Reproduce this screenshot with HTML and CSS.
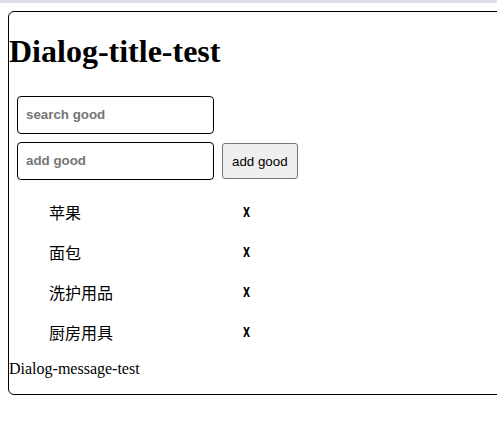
FILE: index.html
```html
<!DOCTYPE html>
<html lang="zh">
<head>
<meta charset="utf-8">
<title>Dialog</title>
<link rel="stylesheet" href="styles.css">
</head>
<body>
<div class="topbar"></div>
<div class="page">
  <div class="dialog">
    <h1 class="dialog-title">Dialog-title-test</h1>
    <div class="controls">
      <input class="field" type="text" placeholder="search good">
      <div class="add-row">
        <input class="field" type="text" placeholder="add good">
        <button class="add-btn" type="button">add good</button>
      </div>
    </div>
    <ul class="goods">
      <li class="good"><span class="good-name">苹果</span><span class="good-del">X</span></li>
      <li class="good"><span class="good-name">面包</span><span class="good-del">X</span></li>
      <li class="good"><span class="good-name">洗护用品</span><span class="good-del">X</span></li>
      <li class="good"><span class="good-name">厨房用具</span><span class="good-del">X</span></li>
    </ul>
    <p class="dialog-message">Dialog-message-test</p>
  </div>
</div>
</body>
</html>
```

FILE: styles.css
```css
html, body {
  margin: 0;
  padding: 0;
  background: #ffffff;
  overflow: hidden;
}

body {
  font-family: "Liberation Serif", "Noto Sans CJK SC", serif;
  color: #000;
}

.topbar {
  height: 3px;
  background: #dedee6;
}

.page {
  padding: 8px 0 0 8px;
}

.dialog {
  width: 600px;
  border: 1px solid #000;
  border-radius: 6px;
}

.dialog-title {
  margin: 21px 0 22px;
  font-size: 32px;
  line-height: 37px;
  font-weight: bold;
}

.controls {
  display: flex;
  flex-direction: column;
  gap: 8px;
  padding: 4px 8px 0;
}

.add-row {
  display: flex;
  align-items: center;
  gap: 8px;
}

.field {
  box-sizing: border-box;
  width: 197px;
  height: 38px;
  margin: 0;
  padding: 0 8px 1px;
  border: 1px solid #000;
  border-radius: 4px;
  font-family: "Liberation Sans", Arial, sans-serif;
  font-size: 13.33px;
  font-weight: bold;
  color: #000;
  background: #fff;
  outline: none;
}

.field::placeholder {
  color: #757575;
  font-weight: bold;
}

.add-btn {
  box-sizing: border-box;
  height: 36px;
  margin: 0;
  padding: 0 9px;
  border: 1px solid #767676;
  border-radius: 3px;
  background: #efefef;
  font-family: "Liberation Sans", Arial, sans-serif;
  font-size: 13.33px;
  color: #000;
}

.goods {
  list-style: none;
  margin: 12px 0 8px;
  padding: 0 0 0 40px;
}

.good {
  display: grid;
  grid-template-columns: 194px auto;
  align-items: center;
  height: 40px;
}

.good-name {
  font-family: "Noto Sans CJK SC", sans-serif;
  font-size: 16px;
}

.good-del {
  display: inline-block;
  justify-self: start;
  font-family: "DejaVu Sans Condensed", "DejaVu Sans", sans-serif;
  font-size: 14px;
  font-weight: bold;
  transform: scaleX(0.72);
  transform-origin: left center;
}

.dialog-message {
  margin: 0 0 16px;
  font-size: 16px;
  line-height: 18px;
}
```
